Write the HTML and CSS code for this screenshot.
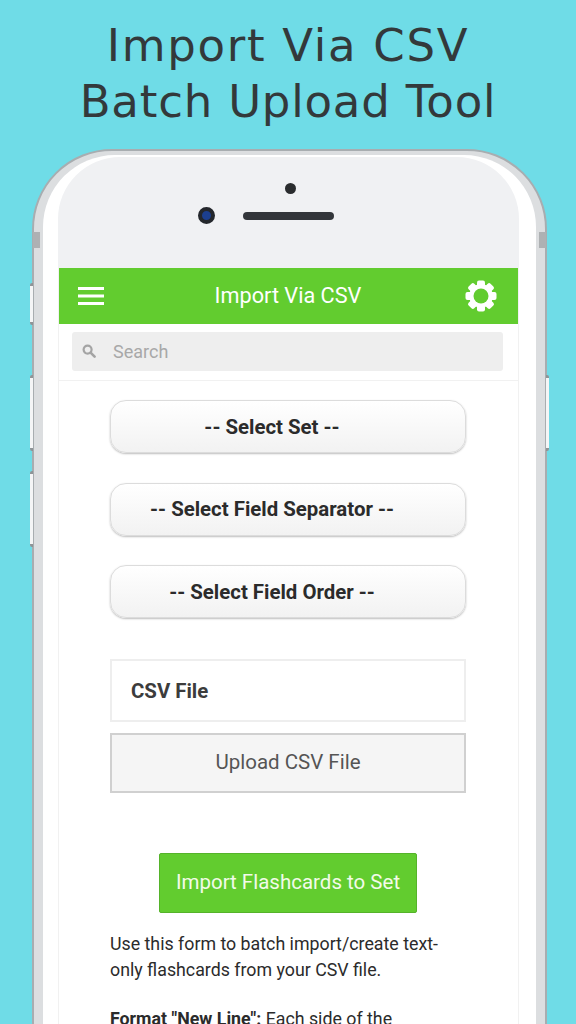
FILE: index.html
```html
<!DOCTYPE html>

<html>

<head>
	<title>Import Via CSV</title>
	<link rel="stylesheet" href="styles.css">
</head>

<body>
	<h1 class="headline">
		<span class="headline-top">Import Via CSV</span>
		<span class="headline-bottom">Batch Upload Tool</span>
	</h1>

	<div class="phone">
		<span class="side-key key-mute"></span>
		<span class="side-key key-up"></span>
		<span class="side-key key-down"></span>
		<span class="side-key key-power"></span>
		<span class="band band-left"></span>
		<span class="band band-right"></span>

		<div class="shell">
			<div class="front">
				<div class="bezel">
					<span class="sensor"></span>
					<div class="bezel-row">
						<span class="camera"></span>
						<span class="speaker"></span>
					</div>
				</div>

				<div class="screen">
					<div class="appbar">
						<svg class="menu-icon" viewBox="0 0 26 18" width="26" height="18">
							<path d="M0 1.5H26M0 9H26M0 16.5H26" stroke="#fff" stroke-width="3" />
						</svg>
						<span class="appbar-title">Import Via CSV</span>
						<svg class="gear-icon" viewBox="0 0 32 32" width="32" height="32">
							<g fill="#fff">
								<rect x="12" y="0.5" width="8" height="31" rx="2" />
								<rect x="12" y="0.5" width="8" height="31" rx="2" transform="rotate(45 16 16)" />
								<rect x="12" y="0.5" width="8" height="31" rx="2" transform="rotate(90 16 16)" />
								<rect x="12" y="0.5" width="8" height="31" rx="2" transform="rotate(135 16 16)" />
							</g>
							<circle cx="16" cy="16" r="11.8" fill="#fff" />
							<circle cx="16" cy="16" r="7.5" fill="#62cc2f" />
						</svg>
					</div>

					<div class="searchwrap">
						<div class="search">
							<svg class="search-icon" viewBox="0 0 14 14" width="14" height="14">
								<circle cx="5.6" cy="5.6" r="4" fill="none" stroke="#a4a4a4" stroke-width="2.2" />
								<path d="M8.6 8.6L12.6 12.6" stroke="#a4a4a4" stroke-width="2.6" stroke-linecap="round" />
							</svg>
							<span>Search</span>
						</div>
					</div>

					<div class="content">
						<div class="picker">-- Select Set --</div>
						<div class="picker">-- Select Field Separator --</div>
						<div class="picker">-- Select Field Order --</div>

						<div class="file-label">CSV File</div>
						<div class="upload">Upload CSV File</div>

						<div class="import">Import Flashcards to Set</div>

						<p class="help">Use this form to batch import/create text-only flashcards from your CSV file.</p>
						<p class="help"><b>Format "New Line":</b> Each side of the</p>
					</div>
				</div>
			</div>
		</div>
	</div>
</body>

</html>
```

FILE: styles.css
```css
html,
body {
	height: 1024px;
}

body {
	margin: 0;
	overflow: hidden;
	background: #6fdce7;
	font-family: Roboto, sans-serif;
	color: #2b2b2b;
}

.headline {
	margin: 0;
	padding-top: 18px;
	height: 149px;
	box-sizing: border-box;
	font-family: "DejaVu Sans", sans-serif;
	font-size: 45px;
	font-weight: 400;
	line-height: 56px;
	text-align: center;
	color: #33393b;
}

.headline-top,
.headline-bottom {
	display: block;
}

.headline-top {
	letter-spacing: 1.7px;
}

.headline-bottom {
	letter-spacing: 0.8px;
}

/* phone body */
.phone {
	position: relative;
	width: 515px;
	margin-left: 32px;
	box-sizing: border-box;
	height: 1000px;
	border: 2px solid #a8adb0;
	border-radius: 80px;
	background: #dcdee0;
}

.shell {
	height: 100%;
	padding: 4px 9px 0;
	box-sizing: border-box;
}

.front {
	height: 100%;
	padding: 2px 17px 0 15px;
	box-sizing: border-box;
	border-radius: 72px;
	background: #fff;
}

.bezel {
	height: 111px;
	border-radius: 62px 62px 0 0;
	background: #f0f1f3;
	display: flex;
	flex-direction: column;
	align-items: center;
}

.sensor {
	width: 11px;
	height: 11px;
	margin-top: 26px;
	margin-left: 3px;
	border-radius: 50%;
	background: #2a2c2e;
}

.bezel-row {
	display: flex;
	align-items: center;
	gap: 28px;
	margin-top: 13px;
	margin-right: 45px;
}

.camera {
	width: 17px;
	height: 17px;
	box-sizing: border-box;
	border: 4px solid #24272c;
	border-radius: 50%;
	background: #1c3f8f;
}

.speaker {
	width: 91px;
	height: 8px;
	border-radius: 4px;
	background: #33363a;
}

.side-key {
	position: absolute;
	left: -4px;
	width: 3px;
	box-sizing: border-box;
	border-top: 3px solid #8f9497;
	border-bottom: 3px solid #8f9497;
	border-radius: 2px 0 0 2px;
	background: #f4f5f6;
}

.key-mute {
	top: 132px;
	height: 42px;
}

.key-up {
	top: 224px;
	height: 76px;
}

.key-down {
	top: 320px;
	height: 76px;
}

.key-power {
	left: auto;
	right: -4px;
	top: 224px;
	height: 76px;
	border-radius: 0 2px 2px 0;
}

.band {
	position: absolute;
	top: 81px;
	width: 7px;
	height: 16px;
	background: #aeb1b3;
}

.band-left {
	left: -1px;
}

.band-right {
	right: -1px;
}

/* app screen */
.screen {
	height: 800px;
	background: #fff;
	border-left: 1px solid #f1f1f1;
	border-right: 1px solid #f1f1f1;
}

.appbar {
	display: flex;
	align-items: center;
	justify-content: space-between;
	height: 56px;
	padding: 0 21px 0 19px;
	background: #62cc2f;
	color: #fff;
}

.appbar-title {
	margin-left: 7px;
	padding-bottom: 2px;
	font-size: 21.7px;
}

.searchwrap {
	padding: 8px 15px 9px 13px;
	border-bottom: 1px solid #f1f1f1;
}

.search {
	display: flex;
	align-items: center;
	gap: 17px;
	height: 39px;
	padding-left: 10px;
	padding-bottom: 1px;
	box-sizing: border-box;
	border-radius: 3px;
	background: #eee;
	font-size: 18px;
	color: #a8a8a8;
}

.content {
	padding: 19px 52px 0 51px;
}

.picker {
	display: flex;
	align-items: center;
	justify-content: center;
	height: 53px;
	margin-bottom: 29.5px;
	padding-right: 32px;
	box-sizing: border-box;
	border: 1px solid #dcdcdc;
	border-radius: 16px;
	background: linear-gradient(#fff, #f2f2f2);
	box-shadow: 0 1px 2px #bdbdbd;
	font-size: 20.4px;
	font-weight: 700;
	color: #2b2b2b;
}

.file-label {
	display: flex;
	align-items: center;
	height: 63px;
	margin-top: 41px;
	padding-left: 19px;
	box-sizing: border-box;
	border: 2px solid #eee;
	font-size: 20.4px;
	font-weight: 700;
	color: #3c3c3c;
}

.upload {
	display: flex;
	align-items: center;
	justify-content: center;
	height: 60px;
	margin-top: 10.5px;
	padding-bottom: 1px;
	box-sizing: border-box;
	border: 2px solid #d0d0d0;
	background: #f5f5f5;
	font-size: 20.5px;
	color: #555;
}

.import {
	display: flex;
	align-items: center;
	justify-content: center;
	width: 258px;
	height: 60px;
	margin: 60.5px auto 0;
	padding-bottom: 2px;
	box-sizing: border-box;
	border: 1px solid #55b32a;
	border-radius: 2px;
	background: #62cc2f;
	font-size: 20.5px;
	color: #f2fbe9;
}

.help {
	margin: 18px 0 0;
	font-size: 17.8px;
	line-height: 26px;
	color: #2b2b2b;
}

.help + .help {
	margin-top: 23px;
}
```
